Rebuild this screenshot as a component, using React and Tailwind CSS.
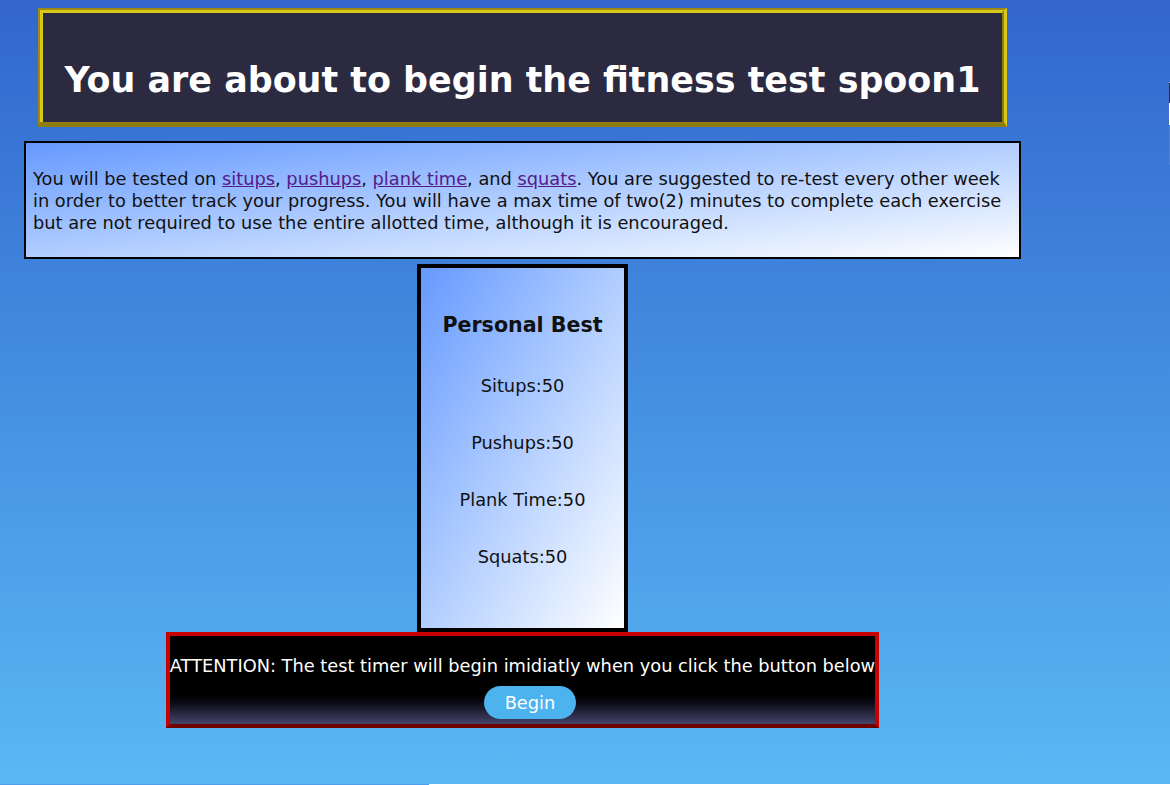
export default function App() {
  const font = "font-['DejaVu_Sans',Verdana,sans-serif]";
  const link = "text-[#551a8b] underline";
  return (
    <div className={`${font} relative w-[1170px] overflow-hidden`}>
      <div className="relative h-[784px] bg-gradient-to-b from-[#3366cd] to-[#5bb8f4] pt-[8px]">
        <div className="w-[1045px] flex flex-col items-center">
          {/* Header */}
          <div className="w-[969px] border-t-[2px] border-l-[2px] border-r-[3px] border-b-[5px] border-t-[#9b8b12] border-l-[#9b8b12] border-r-[#d9c71c] border-b-[#8f7e0e]">
            <div className="border-t-[3px] border-l-[3px] border-r-[2px] border-t-[#d9c71c] border-l-[#d9c71c] border-r-[#8f7e0e] bg-[#2c2a40] pt-[47px] pb-[22px] text-center">
              <h1 className="text-[34.9px] leading-[40px] font-bold text-white whitespace-nowrap">
                You are about to begin the fitness test spoon1
              </h1>
            </div>
          </div>

          {/* Info */}
          <div className="mt-[14px] w-[997px] border-2 border-black bg-gradient-to-br from-[#6699ff] to-white px-[7px] pt-[25px] pb-[23px] text-[17.8px] leading-[22px] text-[#111]">
            You will be tested on <a className={link}>situps</a>, <a className={link}>pushups</a>,{" "}
            <a className={link}>plank time</a>, and <a className={link}>squats</a>. You are suggested to re-test every other week in order to better track your progress. You will have a max time of two(2) minutes to complete each exercise but are not required to use the entire allotted time, although it is encouraged.
          </div>

          {/* Personal best */}
          <div className="mt-[5px] w-[211px] border-4 border-black bg-gradient-to-br from-[#6699ff] to-white pt-[45px] pb-[61px] flex flex-col items-center text-[#111]">
            <h3 className="text-[20.6px] leading-[24px] font-bold">Personal Best</h3>
            <div className="mt-[39px] flex flex-col items-center gap-[37px] text-[17.8px] leading-[20px]">
              <p>Situps:50</p>
              <p>Pushups:50</p>
              <p>Plank Time:50</p>
              <p>Squats:50</p>
            </div>
          </div>

          {/* Attention */}
          <div className="w-[713px] border-4 border-[#c80000] border-b-[#6e0000] bg-gradient-to-b from-black from-60% to-[#46466c] pt-[20px] pb-[5px] flex flex-col items-center text-white">
            <p className="text-[17.8px] leading-[20px] whitespace-nowrap">
              ATTENTION: The test timer will begin imidiatly when you click the button below
            </p>
            <button className="mt-[10px] ml-[15px] h-[33px] w-[92px] rounded-full bg-[#4db3ee] text-[17.8px] leading-[20px] text-white flex items-center justify-center">
              Begin
            </button>
          </div>
        </div>

        {/* right edge sliver */}
        <div className="absolute right-0 top-[82px] w-[1px] flex flex-col">
          <div className="h-[1px] bg-[#c8a0b4]"></div>
          <div className="h-[20px] bg-[#2c2a40]"></div>
          <div className="h-[22px] bg-white"></div>
          <div className="h-[40px] bg-[#4a82dc]"></div>
        </div>
      </div>
      <div className="flex h-[1px]">
        <div className="w-[429px] bg-[#4f9fea]"></div>
        <div className="flex-1 bg-white"></div>
      </div>
    </div>
  );
}
